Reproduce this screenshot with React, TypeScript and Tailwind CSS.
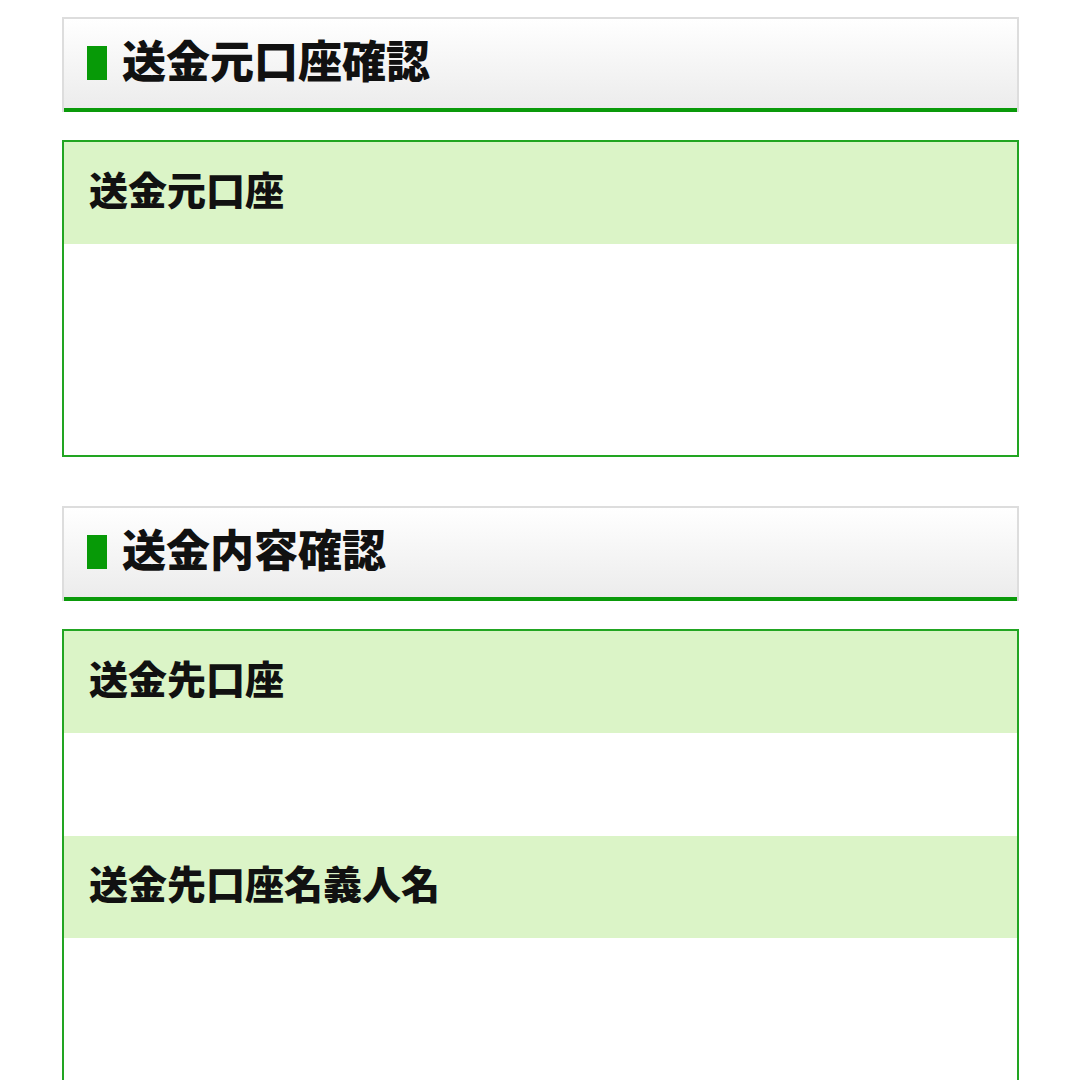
import React from "react";

const font = { fontFamily: '"Noto Sans CJK JP", "Noto Sans", sans-serif' };

function SectionHeader({ title }: { title: string }) {
  return (
    <div className="h-[95px] border-2 border-b-0 border-[#dddddd] bg-gradient-to-b from-[#ffffff] to-[#ebebeb] flex flex-col">
      <div className="flex-1 flex items-center pl-[23px]">
        <div className="w-[20px] h-[34px] bg-[#079a07] mr-[15px] mb-[2px]" />
        <span className="text-[44px] font-black text-[#111111] leading-none pb-[9px]">{title}</span>
      </div>
      <div className="h-[4px] bg-[#0a9a0a]" />
    </div>
  );
}

function Row({ label, height }: { label: string; height: number }) {
  return (
    <>
      <div className="h-[102px] bg-[#dbf4c7] flex items-center pl-[25px]">
        <span className="text-[39px] font-black text-[#111111] leading-none pb-[9px]">{label}</span>
      </div>
      <div className="bg-white" style={{ height }} />
    </>
  );
}

export default function App() {
  return (
    <div className="w-[1080px] h-[1080px] overflow-hidden bg-white" style={font}>
      <div className="ml-[62px] w-[957px] pt-[17px]">
        <SectionHeader title="送金元口座確認" />
        <div className="mt-[28px] border-2 border-[#22a522]">
          <Row label="送金元口座" height={211} />
        </div>
        <div className="mt-[49px]">
          <SectionHeader title="送金内容確認" />
        </div>
        <div className="mt-[28px] border-2 border-[#22a522]">
          <Row label="送金先口座" height={103} />
          <Row label="送金先口座名義人名" height={200} />
        </div>
      </div>
    </div>
  );
}
